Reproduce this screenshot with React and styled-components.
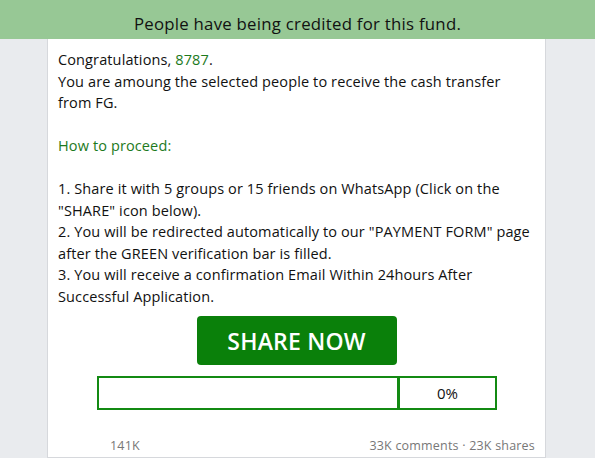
import React from "react";
import styled, { createGlobalStyle } from "styled-components";

const GlobalStyle = createGlobalStyle`
  body {
    margin: 0;
    background: #e9ebee;
    font-family: "Open Sans", "Liberation Sans", sans-serif;
  }
`;

const Header = styled.div`
  background: #97c895;
  height: 39px;
  display: flex;
  align-items: flex-end;
  justify-content: center;
  font-size: 16.8px;
  letter-spacing: 0.25px;
  color: #111;
  padding-bottom: 4px;
  box-sizing: border-box;
`;

const Card = styled.div`
  width: 499px;
  margin-left: 47px;
  background: white;
  border: 1px solid #d6d8dc;
  border-top: none;
  box-sizing: border-box;
  padding: 10px 10px 0 10px;
  height: 419px;
`;

const Text = styled.p`
  margin: 0;
  font-size: 14.5px;
  line-height: 21.5px;
  color: #111;
  letter-spacing: 0.12px;
`;

const Green = styled.span`
  color: #1d7a1d;
`;

const ButtonRow = styled.div`
  display: flex;
  justify-content: center;
  margin-top: 9px;
`;

const ShareButton = styled.button`
  width: 200px;
  height: 49px;
  background: #0a800a;
  color: white;
  border: none;
  border-radius: 4px;
  font-family: inherit;
  font-size: 23px;
  font-weight: 600;
  letter-spacing: 0.2px;
  cursor: pointer;
`;

const Progress = styled.div`
  display: flex;
  width: 400px;
  height: 34px;
  margin: 11px 0 0 39px;
  border: 2px solid #138a13;
  box-sizing: border-box;
`;

const Bar = styled.div`
  flex: 0 0 298px;
  border-right: 3px solid #138a13;
`;

const Percent = styled.div`
  flex: 1;
  display: flex;
  align-items: center;
  justify-content: center;
  font-size: 15px;
  color: #111;
`;

const Footer = styled.div`
  display: flex;
  justify-content: space-between;
  margin-top: 27px;
  padding: 0 0 0 52px;
  font-size: 12.5px;
  letter-spacing: 0.2px;
  color: #777;
`;

export default function App() {
  return (
    <>
      <GlobalStyle />
      <Header>People have being credited for this fund.</Header>
      <Card>
        <Text>
          Congratulations, <Green>8787</Green>.
          <br />
          You are amoung the selected people to receive the cash transfer from FG.
          <br />
          <br />
          <Green>How to proceed:</Green>
          <br />
          <br />
          1. Share it with 5 groups or 15 friends on WhatsApp (Click on the "SHARE" icon below).
          <br />
          2. You will be redirected automatically to our "PAYMENT FORM" page after the GREEN verification bar is filled.
          <br />
          3. You will receive a confirmation Email Within 24hours After Successful Application.
        </Text>
        <ButtonRow>
          <ShareButton>SHARE NOW</ShareButton>
        </ButtonRow>
        <Progress>
          <Bar />
          <Percent>0%</Percent>
        </Progress>
        <Footer>
          <span>141K</span>
          <span>33K comments · 23K shares</span>
        </Footer>
      </Card>
    </>
  );
}
